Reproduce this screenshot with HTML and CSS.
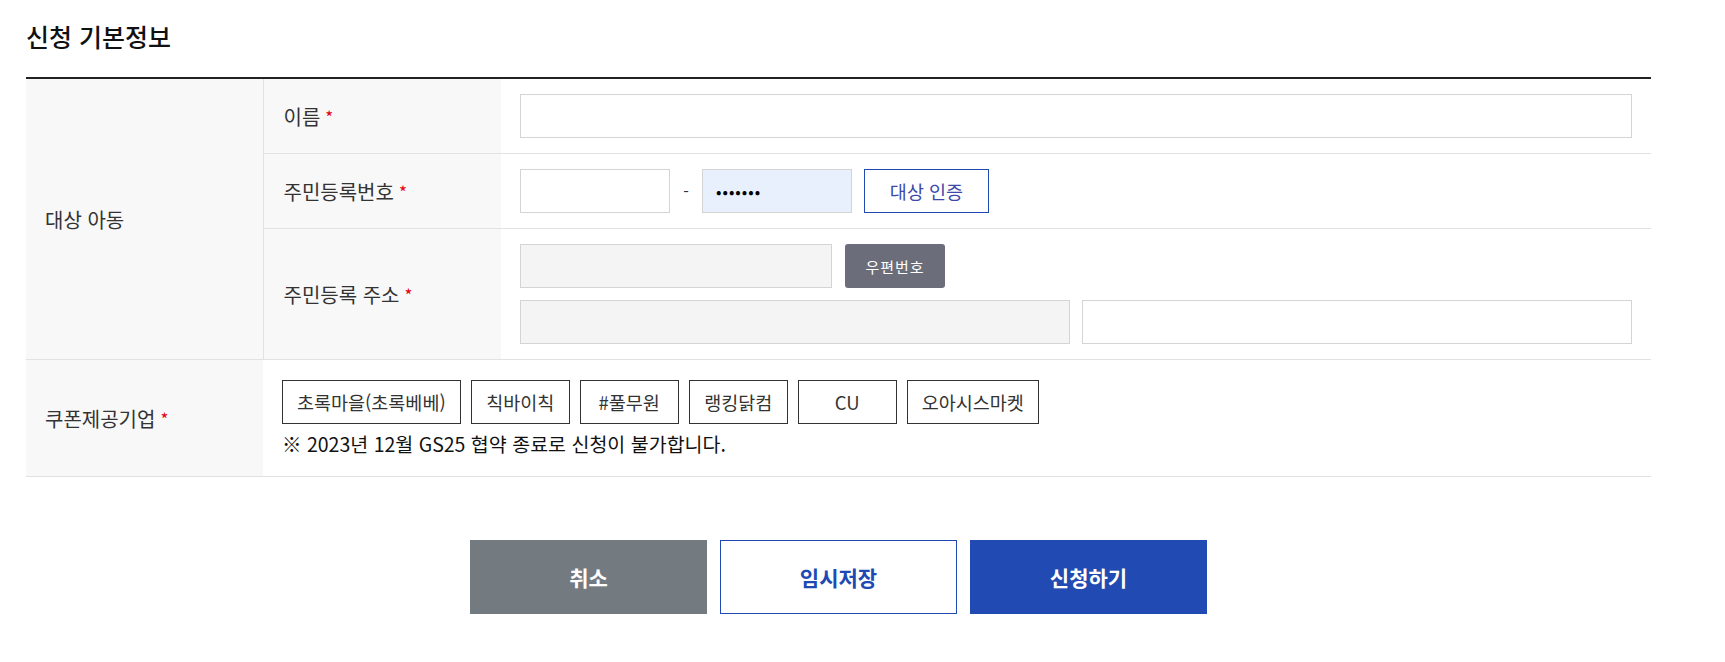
FILE: index.html
```html
<!DOCTYPE html>
<html lang="ko">
<head>
  <meta charset="UTF-8" />
  <meta name="viewport" content="width=device-width, initial-scale=1.0" />
  <title>신청 기본정보</title>
  <link rel="stylesheet" href="styles.css">
</head>
<body>
  <div class="wrap">
    <h2 class="title">신청 기본정보</h2>
    <table class="form-table">
      <colgroup>
        <col class="col-group">
        <col class="col-label">
        <col>
      </colgroup>
      <tr>
        <th rowspan="3" class="group">대상 아동</th>
        <th>이름<span class="req">*</span></th>
        <td><input type="text" class="ipt full"></td>
      </tr>
      <tr>
        <th>주민등록번호<span class="req">*</span></th>
        <td>
          <div class="line">
            <input type="text" class="ipt w150">
            <span class="dash">-</span>
            <input type="password" class="ipt w150 filled" value="1234567">
            <button class="btn-line">대상 인증</button>
          </div>
        </td>
      </tr>
      <tr>
        <th>주민등록 주소<span class="req">*</span></th>
        <td>
          <div class="line">
            <input type="text" class="ipt w312" readonly>
            <button class="btn-zip">우편번호</button>
          </div>
          <div class="line half">
            <input type="text" class="ipt" readonly>
            <input type="text" class="ipt white">
          </div>
        </td>
      </tr>
      <tr>
        <th class="group">쿠폰제공기업<span class="req">*</span></th>
        <td colspan="2" class="coupon">
          <div class="chips">
            <button class="chip">초록마을(초록베베)</button>
            <button class="chip">칙바이칙</button>
            <button class="chip">#풀무원</button>
            <button class="chip">랭킹닭컴</button>
            <button class="chip">CU</button>
            <button class="chip">오아시스마켓</button>
          </div>
          <p class="notice">※ 2023년 12월 GS25 협약 종료로 신청이 불가합니다.</p>
        </td>
      </tr>
    </table>

    <div class="actions">
      <button class="act gray">취소</button>
      <button class="act outline">임시저장</button>
      <button class="act blue">신청하기</button>
    </div>
  </div>
</body>
</html>
```

FILE: styles.css
```css
body {
  margin: 0;
  background: #fff;
  color: #333;
  font-family: "Noto Sans CJK KR", "Noto Sans", sans-serif;
}
.wrap {
  width: 1625px;
  margin: 0 0 0 26px;
}
.title {
  margin: 0;
  padding-top: 18px;
  font-size: 25px;
  line-height: 36px;
  font-weight: 500;
  color: #111;
  margin-bottom: 23px;
}
.form-table {
  width: 100%;
  border-collapse: collapse;
  border-top: 2px solid #222;
  table-layout: fixed;
}
.col-group { width: 237px; }
.col-label { width: 238px; }
.form-table th {
  background: #f8f8f8;
  text-align: left;
  font-weight: 400;
  font-size: 20px;
  color: #333;
  padding: 0 20px;
  border-bottom: 1px solid #e2e2e2;
}
.form-table th.group {
  padding-left: 19px;
}
.form-table th[rowspan] {
  border-right: 1px solid #e2e2e2;
}
.form-table td {
  padding: 15px 19px;
  border-bottom: 1px solid #e2e2e2;
}
.req {
  color: #e60012;
  font-size: 17px;
  margin-left: 5px;
  vertical-align: 1px;
}
.ipt {
  box-sizing: border-box;
  height: 44px;
  border: 1px solid #d4d4d4;
  background: #f4f4f4;
  padding: 0 13px;
  font-size: 16px;
  font-family: inherit;
  outline: none;
  display: block;
}
.full, .white { background: #fff; }
.full { width: 100%; }
.w150 { width: 150px; background: #fff; }
.w312 { width: 312px; }
.filled {
  background: #e8f0fe;
  letter-spacing: 1px;
}
.line {
  display: flex;
  align-items: center;
  gap: 12px;
}
.line + .line { margin-top: 12px; }
.half .ipt { flex: 1; }
.dash {
  width: 8px;
  text-align: center;
  font-size: 16px;
  color: #333;
}
.btn-line {
  width: 125px;
  height: 44px;
  border: 1px solid #2049b3;
  background: #fff;
  color: #3d48aa;
  font-size: 18.5px;
  font-family: inherit;
}
.btn-zip {
  width: 100px;
  height: 44px;
  margin-left: 1px;
  border: none;
  border-radius: 3px;
  background: #6b6e7a;
  color: #fff;
  font-size: 15px;
  letter-spacing: 1px;
  font-family: inherit;
}
.form-table td.coupon {
  padding: 20px 19px 18px;
}
.chips {
  display: flex;
  gap: 10px;
}
.chip {
  box-sizing: border-box;
  min-width: 99px;
  height: 44px;
  padding: 0 14px;
  border: 1px solid #333;
  background: #fff;
  color: #333;
  font-size: 18.5px;
  font-family: inherit;
}
.notice {
  margin: 6px 0 0;
  font-size: 19.5px;
  line-height: 28px;
  color: #111;
}
.actions {
  display: flex;
  justify-content: center;
  gap: 13px;
  margin-top: 63px;
}
.act {
  box-sizing: border-box;
  width: 237px;
  height: 74px;
  border: none;
  font-size: 21px;
  font-weight: 700;
  font-family: inherit;
}
.gray { background: #737b80; color: #fff; }
.outline { background: #fff; color: #2049b3; border: 1px solid #2049b3; }
.blue { background: #214ab2; color: #fff; }
```
